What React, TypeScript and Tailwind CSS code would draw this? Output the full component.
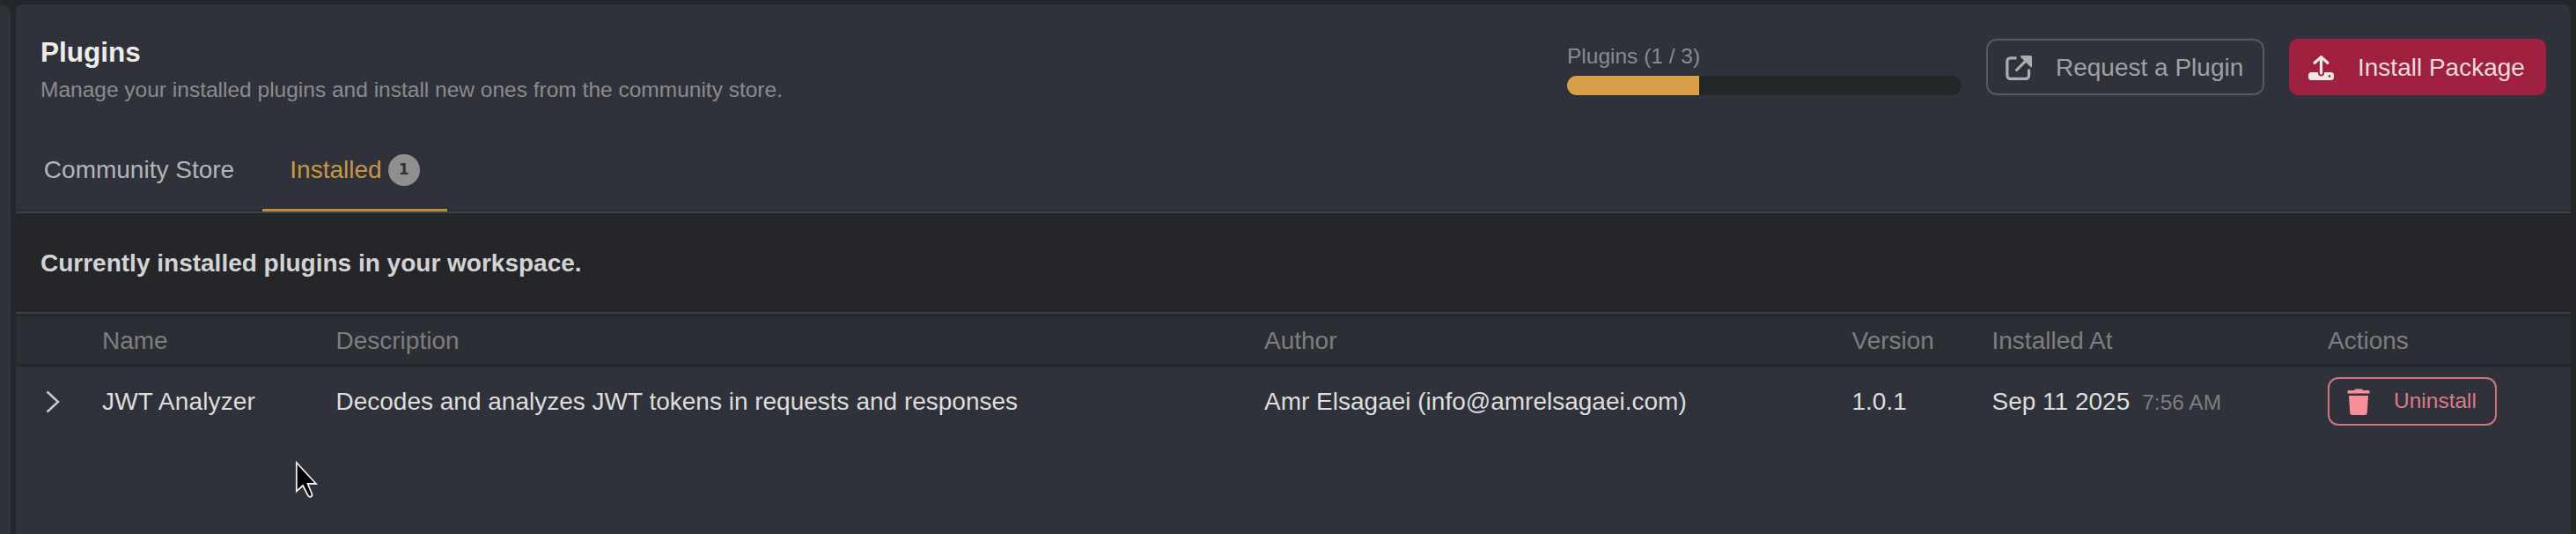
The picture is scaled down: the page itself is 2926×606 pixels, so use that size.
import React from "react";

function ExternalLinkIcon() {
  return (
    <svg width="30" height="28" viewBox="0 0 30 28" fill="none" stroke="#adadad" strokeWidth="3.200" className="shrink-0">
      <path d="M12.500 2.800H5.500A3.600 3.600 0 0 0 1.900 6.400V22.700a3.600 3.600 0 0 0 3.600 3.600H23a3.600 3.600 0 0 0 3.600-3.600V15.500" />
      <path d="M12.600 16.400 27 2.200" strokeLinecap="round" />
      <path d="M18.500 0H28.500a1.500 1.500 0 0 1 1.500 1.500V12.500q0 1.200-1.300.8L17.500 2.200Q16.500.300 18.500 0z" fill="#adadad" stroke="none" />
    </svg>
  );
}

function UploadIcon() {
  return (
    <svg width="29" height="28" viewBox="0 0 29 28" fill="none" className="shrink-0">
      <path
        d="M3.500 19H11v1a3.400 3.400 0 0 0 7 0v-1h7.500a3.500 3.500 0 0 1 3.500 3.500v2a3.500 3.500 0 0 1-3.500 3.500h-22A3.500 3.500 0 0 1 0 24.500v-2A3.500 3.500 0 0 1 3.500 19z"
        fill="#f0e8e8"
      />
      <path d="M14.500 20V2.500M7.200 8.300l7.300-6.700 7.300 6.700" stroke="#f0e8e8" strokeWidth="3.200" strokeLinecap="round" strokeLinejoin="round" />
      <circle cx="24" cy="23.400" r="1.300" fill="#a0213f" />
    </svg>
  );
}

function TrashIcon() {
  return (
    <svg width="26" height="30" viewBox="0 0 26 30" fill="#f98f9a" className="shrink-0">
      <path d="M8 2l1-1.500h8L18 2h6.500a1 1 0 0 1 1 1v2.500H.5V3a1 1 0 0 1 1-1z" />
      <path d="M2 8h22l-1.300 19.500a2.500 2.500 0 0 1-2.500 2.500H5.800a2.500 2.500 0 0 1-2.500-2.500z" />
    </svg>
  );
}

const columns = "grid grid-cols-[98px_265.5px_1054.5px_667.500px_159px_381.500px_1fr] items-center";

export default function App() {
  return (
    <div className="flex h-[606px] w-[2926px] overflow-hidden bg-[#25262a] pt-[5px] font-['Liberation_Sans',Arial,sans-serif] text-[#dedddc]">
      <aside className="mr-[6px] w-3 rounded-tr-[10px] bg-[#2f323b]" />
      <main className="flex w-[2902px] flex-col overflow-hidden rounded-t-lg bg-[#2f323b]">
        <header className="flex h-[137px] shrink-0 items-start justify-between px-7">
          <div className="pt-[33px]">
            <h1 className="text-[31.500px] font-bold leading-[42px] text-[#eeeceb]">Plugins</h1>
            <p className="mt-[4px] text-[24.500px] leading-[36px] text-[#8b8b8d]">
              Manage your installed plugins and install new ones from the community store.
            </p>
          </div>
          <div className="flex items-start pt-[39px]">
            <div className="mr-7 w-[448px]">
              <div className="mb-[3px] text-[24.500px] leading-[39px] text-[#8b8b8d]">Plugins (1 / 3)</div>
              <div className="h-[22px] overflow-hidden rounded-full bg-[#25262a]">
                <div className="h-full w-[150px] bg-[#d8a048]" />
              </div>
            </div>
            <button className="mr-7 flex h-16 w-[316px] items-center rounded-xl border-2 border-[#58595b] pl-5 pt-px text-[28px] text-[#a0a0a1]">
              <ExternalLinkIcon />
              <span className="ml-[27px] whitespace-nowrap">Request a Plugin</span>
            </button>
            <button className="flex h-16 w-[292px] items-center rounded-[10px] bg-[#a0213f] pl-[22px] pt-px text-[28px] text-[#ecd9de]">
              <UploadIcon />
              <span className="ml-[27px] whitespace-nowrap">Install Package</span>
            </button>
          </div>
        </header>

        <nav className="flex h-[100px] shrink-0 border-b-2 border-[#3d424c] text-[28px]">
          <div className="flex w-[280px] items-center justify-center border-b-2 border-[#2a2c33] pt-[5px] text-[#b5b5b6]">
            Community Store
          </div>
          <div className="flex w-[210px] items-center justify-center gap-[7px] border-b-[3px] border-[#b98d45] pt-[6px] text-[#c89646]">
            Installed
            <span className="flex size-9 items-center justify-center rounded-full bg-[#8f8f8f] font-['DejaVu_Sans'] text-[17px] font-bold text-[#303136]">
              1
            </span>
          </div>
          <div className="flex-1 border-b-2 border-[#2a2c33]" />
        </nav>

        <section className="flex h-[114px] shrink-0 items-center border-b-2 border-[#3d424c] bg-[#25262a] pl-7 pt-[2px] text-[28px] font-bold text-[#d3d3d3]">
          Currently installed plugins in your workspace.
        </section>

        <div className={`${columns} h-[60px] shrink-0 border-y-[3px] border-[#25262a] bg-[#2c2e35] pt-[2px] text-[28px] text-[#7e7e80]`}>
          <span />
          <span>Name</span>
          <span>Description</span>
          <span>Author</span>
          <span>Version</span>
          <span>Installed At</span>
          <span>Actions</span>
        </div>

        <div className={`${columns} h-[79px] shrink-0 text-[28px]`}>
          <svg width="16" height="26" viewBox="0 0 16 26" fill="none" stroke="#c9c9ca" strokeWidth="2.500" className="ml-[34px]">
            <path d="M1.500 1.500 14 13 1.500 24.500" />
          </svg>
          <span className="tracking-[0.15px]">JWT Analyzer</span>
          <span>Decodes and analyzes JWT tokens in requests and responses</span>
          <span>Amr Elsagaei (info@amrelsagaei.com)</span>
          <span>1.0.1</span>
          <span className="flex items-baseline">
            Sep 11 2025<span className="ml-[14px] text-[24.500px] text-[#7e7e80]">7:56 AM</span>
          </span>
          <button className="flex h-[55px] w-[192px] items-center rounded-xl border-2 border-[#cf7580] pl-5 text-[24.500px] text-[#dc7a86]">
            <TrashIcon />
            <span className="ml-[27px]">Uninstall</span>
          </button>
        </div>
      </main>

      <svg width="30" height="48" viewBox="0 0 30 48" className="absolute left-[334px] top-[521px]">
        <path
          d="M2.800 4v32.500l7.200-6.500 6 11.500c1.500 2.500 5.300 1 4.300-2L15.500 28h9.500z"
          fill="#000"
          stroke="#eee"
          strokeWidth="1.800"
        />
      </svg>
    </div>
  );
}
